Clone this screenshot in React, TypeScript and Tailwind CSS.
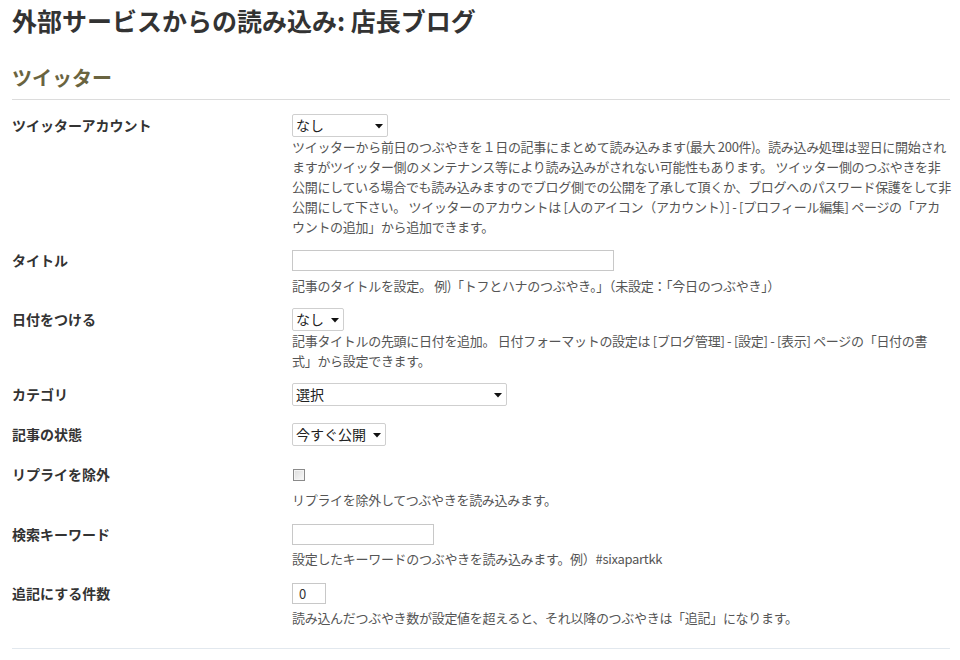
import React from "react";

const font = { fontFamily: '"Noto Sans CJK JP", "Noto Sans", sans-serif' };

function Select({ value, w }: { value: string; w: string }) {
  return (
    <div className={`relative h-[23px] ${w} rounded-[2px] border border-[#cfcfcf] bg-white`}>
      <span className="absolute left-[3px] top-0 text-[14px] leading-[21px] text-[#222]">{value}</span>
      <svg className="absolute right-[4px] top-[9px]" width="8" height="5" viewBox="0 0 8 5">
        <path d="M0 0 L8 0 L4 4.5 Z" fill="#111" />
      </svg>
    </div>
  );
}

function Input({ w, value }: { w: string; value?: string }) {
  return (
    <div className={`h-[21px] ${w} border border-[#c8c8c8] bg-white px-[6px] text-[13px] leading-[19px] text-[#333]`}>
      {value}
    </div>
  );
}

function Label({ children, h }: { children: React.ReactNode; h: string }) {
  return (
    <div className={`flex ${h} items-center text-[14px] font-bold text-[#333]`}>{children}</div>
  );
}

function Desc({ children, mt = "" }: { children: React.ReactNode; mt?: string }) {
  return (
    <div className={`${mt} whitespace-nowrap text-[13px] leading-[20px] tracking-[-0.3px] text-[#555]`}>
      {children}
    </div>
  );
}

export default function App() {
  return (
    <div className="min-h-[660px] w-[960px] overflow-hidden bg-white pl-[12px] pr-[10px] pt-[4px]" style={font}>
      <h1 className="text-[25px] font-bold leading-[32px] text-[#333]">外部サービスからの読み込み: 店長ブログ</h1>
      <h2 className="mt-[28px] border-b border-[#dcdcdc] pb-[7px] text-[20px] font-bold leading-[28px] text-[#6a6440]">
        ツイッター
      </h2>

      <div className="mt-[14px] grid grid-cols-[280px_1fr]">
        <Label h="h-[23px]">ツイッターアカウント</Label>
        <div>
          <Select value="なし" w="w-[96px]" />
          <Desc>
            ツイッターから前日のつぶやきを１日の記事にまとめて読み込みます(最大 200件)。読み込み処理は翌日に開始され<br />
            ますがツイッター側のメンテナンス等により読み込みがされない可能性もあります。 ツイッター側のつぶやきを非<br />
            公開にしている場合でも読み込みますのでブログ側での公開を了承して頂くか、ブログへのパスワード保護をして非<br />
            公開にして下さい。 ツイッターのアカウントは [人のアイコン（アカウント）] - [プロフィール編集] ページの「アカ<br />
            ウントの追加」から追加できます。
          </Desc>
        </div>
      </div>

      <div className="mt-[13px] grid grid-cols-[280px_1fr]">
        <Label h="h-[21px]">タイトル</Label>
        <div>
          <Input w="w-[322px]" />
          <Desc mt="mt-[5px]">記事のタイトルを設定。 例)「トフとハナのつぶやき。」（未設定：「今日のつぶやき」）</Desc>
        </div>
      </div>

      <div className="mt-[12px] grid grid-cols-[280px_1fr]">
        <Label h="h-[23px]">日付をつける</Label>
        <div>
          <Select value="なし" w="w-[52px]" />
          <Desc>
            記事タイトルの先頭に日付を追加。 日付フォーマットの設定は [ブログ管理] - [設定] - [表示] ページの「日付の書<br />
            式」から設定できます。
          </Desc>
        </div>
      </div>

      <div className="mt-[12px] grid grid-cols-[280px_1fr]">
        <Label h="h-[23px]">カテゴリ</Label>
        <div>
          <Select value="選択" w="w-[215px]" />
        </div>
      </div>

      <div className="mt-[17px] grid grid-cols-[280px_1fr]">
        <Label h="h-[23px]">記事の状態</Label>
        <div>
          <Select value="今すぐ公開" w="w-[94px]" />
        </div>
      </div>

      <div className="mt-[17px] grid grid-cols-[280px_1fr]">
        <Label h="h-[23px]">リプライを除外</Label>
        <div>
          <div className="flex h-[23px] items-center pl-[1px]">
            <span className="block h-[12px] w-[12px] border border-[#8a8a8a] bg-gradient-to-br from-[#dcdcdc] to-[#fafafa] shadow-[inset_0_0_0_1px_#f4f4f4]" />
          </div>
          <Desc mt="mt-[4px]">リプライを除外してつぶやきを読み込みます。</Desc>
        </div>
      </div>

      <div className="mt-[14px] grid grid-cols-[280px_1fr]">
        <Label h="h-[21px]">検索キーワード</Label>
        <div>
          <Input w="w-[142px]" />
          <Desc mt="mt-[4px]">設定したキーワードのつぶやきを読み込みます。例）#sixapartkk</Desc>
        </div>
      </div>

      <div className="mt-[14px] grid grid-cols-[280px_1fr]">
        <Label h="h-[21px]">追記にする件数</Label>
        <div>
          <Input w="w-[34px]" value="0" />
          <Desc mt="mt-[4px]">読み込んだつぶやき数が設定値を超えると、それ以降のつぶやきは「追記」になります。</Desc>
        </div>
      </div>

      <div className="mt-[20px] border-t border-[#e2e8ee]" />
    </div>
  );
}
